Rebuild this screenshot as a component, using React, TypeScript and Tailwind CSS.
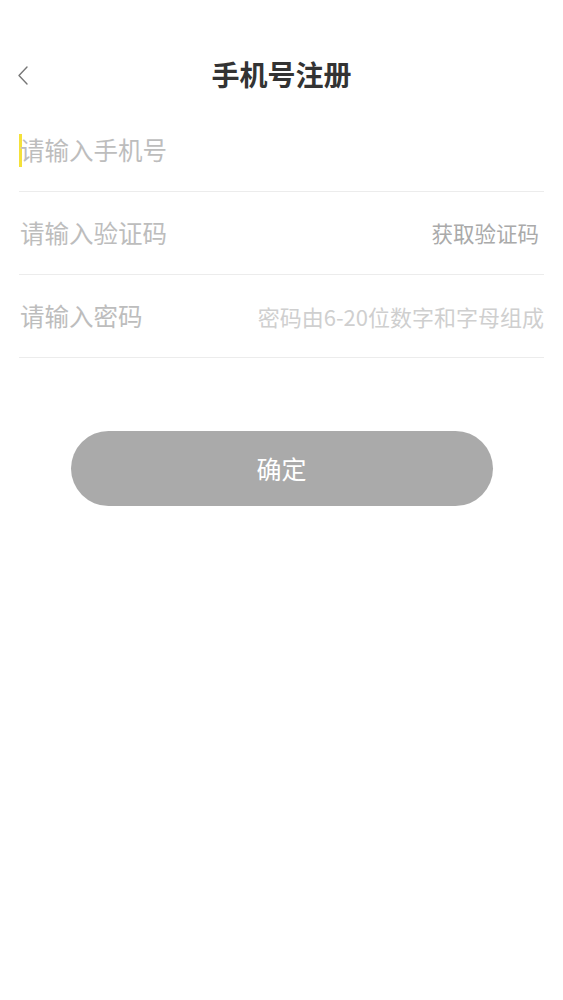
const font = { fontFamily: '"Noto Sans CJK SC", "Noto Sans", sans-serif' };

function Row({
  children,
  right,
}: {
  children: React.ReactNode;
  right?: React.ReactNode;
}) {
  return (
    <div className="flex h-[83px] items-center justify-between border-b border-[#ececec]">
      {children}
      {right}
    </div>
  );
}

export default function App() {
  return (
    <div className="min-h-screen w-full bg-white pt-[50px]" style={font}>
      <div className="relative flex h-[48px] items-center justify-center">
        <button type="button" aria-label="返回" className="absolute left-[17px] top-[15px] text-[#777]">
          <svg width="12" height="20" viewBox="0 0 12 20" fill="none">
            <polyline points="10,2 2,10.5 10,19" stroke="currentColor" strokeWidth="1.4" strokeLinecap="round" strokeLinejoin="round" />
          </svg>
        </button>
        <h1 className="text-[28px] font-bold text-[#333]">手机号注册</h1>
      </div>

      <div className="mt-[11px] px-[19px]">
        <Row>
          <div className="flex items-center">
            <span className="h-[33px] w-[3px] bg-[#f4e13a]" />
            <span className="-ml-[2px] text-[24.5px] text-[#bdbdbd]">请输入手机号</span>
          </div>
        </Row>
        <Row right={<span className="pr-[5px] text-[21.5px] text-[#aaaaaa]">获取验证码</span>}>
          <span className="pl-[1px] text-[24.5px] text-[#bdbdbd]">请输入验证码</span>
        </Row>
        <Row right={<span className="text-[22px] text-[#cfcfcf]">密码由6-20位数字和字母组成</span>}>
          <span className="pl-[1px] text-[24.5px] text-[#bdbdbd]">请输入密码</span>
        </Row>
      </div>

      <button
        type="button"
        className="mx-auto mt-[73px] flex h-[75px] w-[422px] items-center justify-center rounded-full bg-[#aaaaaa] text-[25px] text-white"
      >
        确定
      </button>
    </div>
  );
}
